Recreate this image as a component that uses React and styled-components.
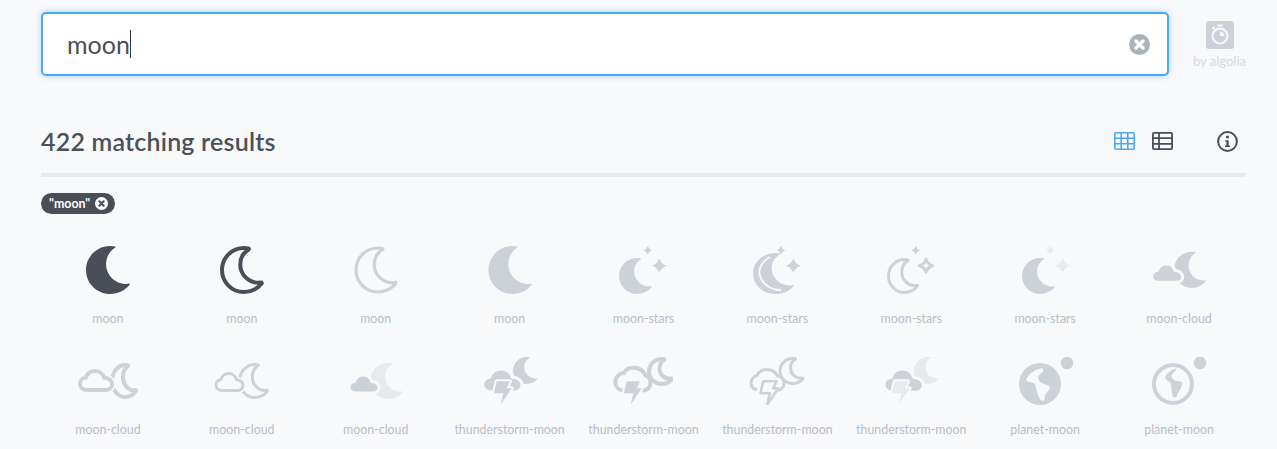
import React from "react";
import styled, { createGlobalStyle } from "styled-components";

const DARK = "#4a4f57";
const GREY = "#cdd2d9";
const LIGHT = "#e7eaed";
const BG = "#f8f9fb";

const GlobalStyle = createGlobalStyle`
  html, body {
    margin: 0;
    background: ${BG};
    font-family: "Lato", "Open Sans", sans-serif;
  }
`;

const Page = styled.div`
  padding: 12px 31px 0 41px;
`;

const SearchRow = styled.div`
  display: flex;
  align-items: flex-start;
`;

const SearchBox = styled.div`
  flex: 1;
  height: 64px;
  box-sizing: border-box;
  display: flex;
  align-items: center;
  justify-content: space-between;
  padding: 0 17px 0 24px;
  background: #fff;
  border: 2px solid #4aa8f5;
  border-radius: 5px;
  box-shadow: 0 0 6px rgba(74, 168, 245, 0.45);
`;

const SearchText = styled.span`
  font-size: 25px;
  line-height: 28px;
  color: ${DARK};
  border-right: 1px solid #333;
`;

const AlgoliaBlock = styled.div`
  width: 53px;
  margin: 9px 0 0 24px;
  display: flex;
  flex-direction: column;
  align-items: center;
  gap: 5px;
  font-size: 13px;
  line-height: 15px;
  white-space: nowrap;
  color: #d6d9de;
`;

const TitleRow = styled.div`
  display: flex;
  align-items: center;
  height: 40px;
  margin-top: 45px;
`;

const Title = styled.h1`
  flex: 1;
  margin: 0;
  font-size: 25px;
  font-weight: 600;
  letter-spacing: 0.2px;
  color: #4a5158;
`;

const ViewButtons = styled.div`
  display: flex;
  align-items: center;
  gap: 17px;
  margin-right: 44px;
`;

const InfoSlot = styled.div`
  display: flex;
  margin-right: 8px;
`;

const Divider = styled.div`
  height: 4px;
  margin-top: 12px;
  background: #e9eaec;
`;

const Chip = styled.div`
  display: inline-flex;
  align-items: center;
  gap: 5px;
  height: 21px;
  margin-top: 16px;
  padding: 0 7px 0 8px;
  border-radius: 11px;
  background: ${DARK};
  color: #fff;
  font-size: 12.4px;
  font-weight: 700;
`;

const Grid = styled.div`
  display: grid;
  grid-template-columns: repeat(9, 1fr);
  grid-auto-rows: 111px;
  margin-top: 32px;
`;

const Cell = styled.div`
  display: flex;
  flex-direction: column;
  align-items: center;
`;

const IconSvg = styled.svg`
  width: 60px;
  height: 48px;
  display: block;
`;

const Label = styled.div`
  margin-top: 15px;
  font-size: 12.4px;
  line-height: 20px;
  color: #b9bec5;
`;

const MOON =
  "M26 0C27.8 0 29.6.2 31 .5C31.6.7 31.6 1.3 31.2 1.6C25.5 5 22 11 22 18C22 29 31 38 42 38L44.8 37.6C45.5 37.5 45.8 38.2 45.4 38.8C41 44.5 34 48 26 48C12.7 48 2 37.3 2 24C2 10.7 12.7 0 26 0Z";
const CLOUD =
  "M7 18C3 18 0 15.5 0 12C0 9 2.5 6.5 5.5 6.5C7 2.5 10.5 0 14.5 0C19 0 22.5 3 23.5 6.5C27.5 6.5 31 9 31 12.5C31 16 28 18 25 18Z";
const BOLT = "M16.7 24.3H30L26.7 31.3H31.7L20.7 47.7L23.3 36.3H14Z";
const LAND_FULL =
  "M27.7 11.3C23 11.5 14 15 11 23C14 26 18 25 19.3 26.3C21 29 21 32 22 34.7C23 38 24 41 25.3 43C27 44 29 44 29.3 43C30 40 30 38 31 36.3C33 34 35 33 35 30.3C33 27 30 28 27.7 26.3C25 25 24.5 24.5 24.3 23.7C23 21.5 23 20 23.3 19C24.5 17 27.5 16 28.3 13.7Z";
const LAND_SMALL =
  "M27.7 11.3C23 12 18 16 16 20.3C17.5 24 20.5 24 21.7 26.3C22.5 30 22 35 24.3 39.7C25.5 40.5 27 40.5 27.7 39.7C28.5 35 33 32 33.3 25.7C31 23.5 27 24.5 25 23C23 21.5 22 19.5 22.7 18C24 16 27 14 27.7 11.3Z";

// shapes are stretched into a box so one outline serves every icon
function Moon({ x, y, w, h, fill = "none", stroke = "none", sw = 0 }) {
  const sx = w / 43.8;
  const sy = h / 48;
  return (
    <path
      d={MOON}
      transform={`translate(${x - 2 * sx} ${y}) scale(${sx} ${sy})`}
      fill={fill}
      stroke={stroke}
      strokeWidth={sw}
      strokeLinejoin="round"
      vectorEffect="non-scaling-stroke"
    />
  );
}

function Cloud({ x, y, w, h, fill = "none", stroke = "none", sw = 0 }) {
  return (
    <path
      d={CLOUD}
      transform={`translate(${x} ${y}) scale(${w / 31} ${h / 18})`}
      fill={fill}
      stroke={stroke}
      strokeWidth={sw}
      strokeLinejoin="round"
      vectorEffect="non-scaling-stroke"
    />
  );
}

function Star({ cx, cy, r, fill = "none", stroke = "none", sw = 0 }) {
  const k = r * 0.22;
  const d = `M${cx} ${cy - r}Q${cx + k} ${cy - k} ${cx + r} ${cy}Q${cx + k} ${cy + k} ${cx} ${cy + r}Q${cx - k} ${cy + k} ${cx - r} ${cy}Q${cx - k} ${cy - k} ${cx} ${cy - r}Z`;
  return <path d={d} fill={fill} stroke={stroke} strokeWidth={sw} strokeLinejoin="round" />;
}

function Bolt({ dx = 0, fill = "none", stroke = "none", sw = 0, halo }) {
  return (
    <g transform={`translate(${dx} 0)`}>
      {halo && <path d={BOLT} fill="none" stroke={BG} strokeWidth={4} strokeLinejoin="round" />}
      <path d={BOLT} fill={fill} stroke={stroke} strokeWidth={sw} strokeLinejoin="round" />
    </g>
  );
}

const icons = {
  moonSolidDark: <Moon x={8} y={0} w={44} h={48} fill={DARK} />,
  moonLineDark: <Moon x={10} y={2} w={40} h={44} stroke={DARK} sw={4} />,
  moonLine: <Moon x={10} y={2} w={40} h={44} stroke={GREY} sw={3.2} />,
  moonSolid: <Moon x={8.5} y={0} w={43.5} h={48} fill={GREY} />,
  starsSolid: (
    <>
      <Moon x={6} y={12} w={33} h={36} fill={GREY} />
      <Star cx={46.3} cy={19.7} r={7.5} fill={GREY} />
      <Star cx={34.7} cy={4.3} r={4.5} fill={GREY} />
    </>
  ),
  starsCrescent: (
    <>
      <Moon x={6} y={7} w={41} h={41} fill={GREY} />
      <path d="M23 11C14 16 11 24 13 30C15 38 24 44 34 44" fill="none" stroke={BG} strokeWidth={2} />
      <Star cx={46.3} cy={19.7} r={7.5} fill={GREY} />
      <Star cx={34} cy={4.3} r={4.5} fill={GREY} />
    </>
  ),
  starsLine: (
    <>
      <Moon x={7.5} y={13.5} w={29} h={33} stroke={GREY} sw={3} />
      <Star cx={45} cy={19.7} r={6.5} stroke={GREY} sw={3} />
      <Star cx={34.7} cy={4.3} r={4.5} fill={GREY} />
    </>
  ),
  starsLight: (
    <>
      <Moon x={7} y={12} w={33} h={36} fill={GREY} />
      <Star cx={47.7} cy={19.7} r={7.5} fill={LIGHT} />
      <Star cx={35.3} cy={4.3} r={4.5} fill={LIGHT} />
    </>
  ),
  cloudSolid: (
    <>
      <Moon x={25} y={5.7} w={32} h={36.3} fill={GREY} />
      <Cloud x={2.7} y={18} w={31} h={18.3} fill={GREY} stroke={BG} sw={3} />
    </>
  ),
  cloudThick: (
    <>
      <Moon x={34} y={8} w={24} h={32} stroke={GREY} sw={4} />
      <Cloud x={1} y={14} w={33} h={19} fill={BG} stroke={BG} sw={7} />
      <Cloud x={2} y={14} w={32} h={19} stroke={GREY} sw={4} />
    </>
  ),
  cloudLine: (
    <>
      <Moon x={27.5} y={7.5} w={28} h={33} stroke={GREY} sw={3} />
      <Cloud x={4} y={16.5} w={27} h={17} fill={BG} stroke={BG} sw={6} />
      <Cloud x={4} y={16.5} w={27} h={17} stroke={GREY} sw={3} />
    </>
  ),
  cloudLight: (
    <>
      <Moon x={24} y={6} w={33} h={36} fill={LIGHT} />
      <Cloud x={3} y={18} w={30} h={18} fill={GREY} stroke={BG} sw={3} />
    </>
  ),
  stormSolid: (
    <>
      <Moon x={33} y={0} w={24.7} h={27} fill={GREY} />
      <Cloud x={2.7} y={12} w={39.3} h={23} fill={GREY} stroke={BG} sw={3} />
      <Bolt fill={GREY} halo />
    </>
  ),
  stormThick: (
    <>
      <Moon x={36} y={2} w={23} h={25} stroke={GREY} sw={4} />
      <path
        d="M9 33.5C4 32.5 2.3 28 2.3 25C2.3 19.5 7 16 11 16C13 12 17 10.7 20.5 10.7C27 10.7 31 14.5 32.5 18.5C35 18.5 37.5 21.5 37.5 25.5C37.5 30 35 32.5 31 33.5"
        fill={BG}
        stroke={GREY}
        strokeWidth={4}
        strokeLinecap="round"
      />
      <Bolt dx={-3} fill={GREY} halo />
    </>
  ),
  stormLine: (
    <>
      <Moon x={33} y={1.5} w={23} h={25} stroke={GREY} sw={3} />
      <path
        d="M9 32.5C5 31.5 4 28 4 26C4 22 7 19 10 18.5C12 14.5 16 12.5 19.5 12.5C25 12.5 29 15.5 30.5 19C33.5 19 37 22 37 26C37 29.5 35 32 32 33"
        fill={BG}
        stroke={GREY}
        strokeWidth={3}
        strokeLinecap="round"
      />
      <Bolt dx={-.5} stroke={GREY} sw={2.6} />
    </>
  ),
  stormLight: (
    <>
      <Moon x={33} y={0} w={25} h={27} fill={LIGHT} />
      <Cloud x={3} y={12} w={39.3} h={23.3} fill={GREY} stroke={BG} sw={3} />
      <Bolt dx={-3} fill={LIGHT} halo />
    </>
  ),
  planetSolid: (
    <>
      <circle cx="25" cy="27" r="21" fill={GREY} />
      <path d={LAND_FULL} fill={BG} />
      <circle cx="52" cy="6" r="6.3" fill={GREY} />
    </>
  ),
  planetLine: (
    <>
      <circle cx="24" cy="27" r="19" fill="none" stroke={GREY} strokeWidth="4" />
      <path d={LAND_SMALL} fill={GREY} />
      <circle cx="51" cy="6" r="6.3" fill={GREY} />
    </>
  ),
};

const results = [
  ["moon", "moonSolidDark"],
  ["moon", "moonLineDark"],
  ["moon", "moonLine"],
  ["moon", "moonSolid"],
  ["moon-stars", "starsSolid"],
  ["moon-stars", "starsCrescent"],
  ["moon-stars", "starsLine"],
  ["moon-stars", "starsLight"],
  ["moon-cloud", "cloudSolid"],
  ["moon-cloud", "cloudThick"],
  ["moon-cloud", "cloudLine"],
  ["moon-cloud", "cloudLight"],
  ["thunderstorm-moon", "stormSolid"],
  ["thunderstorm-moon", "stormThick"],
  ["thunderstorm-moon", "stormLine"],
  ["thunderstorm-moon", "stormLight"],
  ["planet-moon", "planetSolid"],
  ["planet-moon", "planetLine"],
];

function ClearIcon({ size, circle, cross }) {
  return (
    <svg width={size} height={size} viewBox="0 0 21 21">
      <circle cx="10.5" cy="10.5" r="10.5" fill={circle} />
      <path d="M7 7L14 14M14 7L7 14" stroke={cross} strokeWidth="3.4" strokeLinecap="round" />
    </svg>
  );
}

function StopwatchIcon() {
  return (
    <svg width="28" height="28" viewBox="0 0 28 28">
      <rect width="28" height="28" rx="3" fill="#cdd2d9" />
      <circle cx="14" cy="15" r="7.5" fill="none" stroke="#f8f9fb" strokeWidth="2" />
      <path d="M14 15V10.5A4.5 4.5 0 0 1 18.5 15Z" fill="#f8f9fb" />
      <path d="M11.5 4.5H16.5M6.5 8L8.5 6" stroke="#f8f9fb" strokeWidth="2" />
    </svg>
  );
}

function GridIcon() {
  return (
    <svg width="21" height="18" viewBox="0 0 21 18" fill="none" stroke="#4aa8f5" strokeWidth="1.6">
      <rect x=".8" y=".8" width="19.4" height="16.4" rx="1" />
      <path d="M7.2 1V17M13.8 1V17M1 6.2H20M1 11.8H20" />
    </svg>
  );
}

function TableIcon() {
  return (
    <svg width="21" height="18" viewBox="0 0 21 18" fill="none" stroke={DARK} strokeWidth="1.8">
      <rect x=".9" y=".9" width="19.2" height="16.2" rx="1" />
      <path d="M7 1V17M1 6.2H20M1 11.8H20" />
    </svg>
  );
}

function InfoIcon() {
  return (
    <svg width="21" height="21" viewBox="0 0 21 21">
      <circle cx="10.5" cy="10.5" r="9.4" fill="none" stroke={DARK} strokeWidth="2" />
      <circle cx="10.5" cy="6" r="1.6" fill={DARK} />
      <path d="M8 9.2H11.7V14.6H13V16H8V14.6H9.4V10.6H8Z" fill={DARK} />
    </svg>
  );
}

export default function App() {
  return (
    <>
      <GlobalStyle />
      <Page>
        <SearchRow>
          <SearchBox>
            <SearchText>moon</SearchText>
            <ClearIcon size={21} circle="#adb3ba" cross="#fff" />
          </SearchBox>
          <AlgoliaBlock>
            <StopwatchIcon />
            by algolia
          </AlgoliaBlock>
        </SearchRow>
        <TitleRow>
          <Title>422 matching results</Title>
          <ViewButtons>
            <GridIcon />
            <TableIcon />
          </ViewButtons>
          <InfoSlot>
            <InfoIcon />
          </InfoSlot>
        </TitleRow>
        <Divider />
        <Chip>
          "moon"
          <ClearIcon size={13} circle="#fff" cross={DARK} />
        </Chip>
        <Grid>
          {results.map(([name, icon], i) => (
            <Cell key={i}>
              <IconSvg viewBox="0 0 60 48">{icons[icon]}</IconSvg>
              <Label>{name}</Label>
            </Cell>
          ))}
        </Grid>
      </Page>
    </>
  );
}
